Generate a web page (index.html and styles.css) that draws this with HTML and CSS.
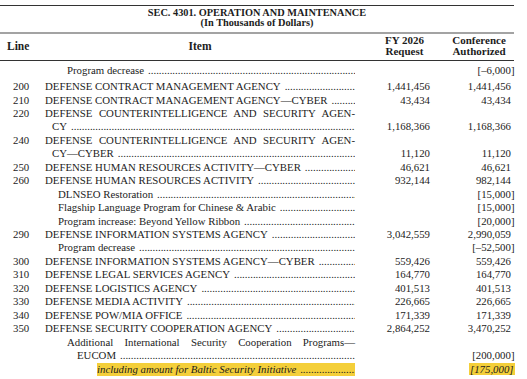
FILE: index.html
```html
<!DOCTYPE html>
<html>
<head>
    <meta charset="UTF-8">
    <link rel="stylesheet" href="styles.css">
</head>
<body>
    <div class="sheet">
        <h1 class="title">SEC. 4301. OPERATION AND MAINTENANCE<br>(In Thousands of Dollars)</h1>
        <div class="grid head">
            <div class="ln">Line</div>
            <div class="item">Item</div>
            <div class="req">FY 2026<br>Request</div>
            <div class="conf">Conference<br>Authorized</div>
        </div>
        <div class="rows">
            <div class="grid row first">
                <div class="ln"></div>
                <div class="item"><div class="lead sub2"><span>Program decrease</span></div></div>
                <div class="amt"></div>
                <div class="amt"><span class="br">[–6,000]</span></div>
            </div>
            <div class="grid row">
                <div class="ln">200</div>
                <div class="item"><div class="lead"><span>DEFENSE CONTRACT MANAGEMENT AGENCY</span></div></div>
                <div class="amt">1,441,456</div>
                <div class="amt">1,441,456</div>
            </div>
            <div class="grid row">
                <div class="ln">210</div>
                <div class="item"><div class="lead"><span>DEFENSE CONTRACT MANAGEMENT AGENCY—CYBER</span></div></div>
                <div class="amt">43,434</div>
                <div class="amt">43,434</div>
            </div>
            <div class="grid row">
                <div class="ln">220</div>
                <div class="item">
                    <div class="just">DEFENSE COUNTERINTELLIGENCE AND SECURITY AGEN-</div>
                    <div class="lead cont"><span>CY</span></div>
                </div>
                <div class="amt">1,168,366</div>
                <div class="amt">1,168,366</div>
            </div>
            <div class="grid row">
                <div class="ln">240</div>
                <div class="item">
                    <div class="just">DEFENSE COUNTERINTELLIGENCE AND SECURITY AGEN-</div>
                    <div class="lead cont"><span>CY—CYBER</span></div>
                </div>
                <div class="amt">11,120</div>
                <div class="amt">11,120</div>
            </div>
            <div class="grid row">
                <div class="ln">250</div>
                <div class="item"><div class="lead"><span>DEFENSE HUMAN RESOURCES ACTIVITY—CYBER</span></div></div>
                <div class="amt">46,621</div>
                <div class="amt">46,621</div>
            </div>
            <div class="grid row">
                <div class="ln">260</div>
                <div class="item"><div class="lead"><span>DEFENSE HUMAN RESOURCES ACTIVITY</span></div></div>
                <div class="amt">932,144</div>
                <div class="amt">982,144</div>
            </div>
            <div class="grid row">
                <div class="ln"></div>
                <div class="item"><div class="lead sub"><span>DLNSEO Restoration</span></div></div>
                <div class="amt"></div>
                <div class="amt"><span class="br">[15,000]</span></div>
            </div>
            <div class="grid row">
                <div class="ln"></div>
                <div class="item"><div class="lead sub"><span>Flagship Language Program for Chinese &amp; Arabic</span></div></div>
                <div class="amt"></div>
                <div class="amt"><span class="br">[15,000]</span></div>
            </div>
            <div class="grid row">
                <div class="ln"></div>
                <div class="item"><div class="lead sub"><span>Program increase: Beyond Yellow Ribbon</span></div></div>
                <div class="amt"></div>
                <div class="amt"><span class="br">[20,000]</span></div>
            </div>
            <div class="grid row">
                <div class="ln">290</div>
                <div class="item"><div class="lead"><span>DEFENSE INFORMATION SYSTEMS AGENCY</span></div></div>
                <div class="amt">3,042,559</div>
                <div class="amt">2,990,059</div>
            </div>
            <div class="grid row">
                <div class="ln"></div>
                <div class="item"><div class="lead sub"><span>Program decrease</span></div></div>
                <div class="amt"></div>
                <div class="amt"><span class="br">[–52,500]</span></div>
            </div>
            <div class="grid row">
                <div class="ln">300</div>
                <div class="item"><div class="lead"><span>DEFENSE INFORMATION SYSTEMS AGENCY—CYBER</span></div></div>
                <div class="amt">559,426</div>
                <div class="amt">559,426</div>
            </div>
            <div class="grid row">
                <div class="ln">310</div>
                <div class="item"><div class="lead"><span>DEFENSE LEGAL SERVICES AGENCY</span></div></div>
                <div class="amt">164,770</div>
                <div class="amt">164,770</div>
            </div>
            <div class="grid row">
                <div class="ln">320</div>
                <div class="item"><div class="lead"><span>DEFENSE LOGISTICS AGENCY</span></div></div>
                <div class="amt">401,513</div>
                <div class="amt">401,513</div>
            </div>
            <div class="grid row">
                <div class="ln">330</div>
                <div class="item"><div class="lead"><span>DEFENSE MEDIA ACTIVITY</span></div></div>
                <div class="amt">226,665</div>
                <div class="amt">226,665</div>
            </div>
            <div class="grid row">
                <div class="ln">340</div>
                <div class="item"><div class="lead"><span>DEFENSE POW/MIA OFFICE</span></div></div>
                <div class="amt">171,339</div>
                <div class="amt">171,339</div>
            </div>
            <div class="grid row">
                <div class="ln">350</div>
                <div class="item"><div class="lead"><span>DEFENSE SECURITY COOPERATION AGENCY</span></div></div>
                <div class="amt">2,864,252</div>
                <div class="amt">3,470,252</div>
            </div>
            <div class="grid row">
                <div class="ln"></div>
                <div class="item">
                    <div class="just sub2">Additional International Security Cooperation Programs—</div>
                    <div class="lead sub3"><span>EUCOM</span></div>
                </div>
                <div class="amt"></div>
                <div class="amt"><span class="br">[200,000]</span></div>
            </div>
            <div class="grid row">
                <div class="ln"></div>
                <div class="item"><div class="lead sub4 mark"><span>including amount for Baltic Security Initiative</span></div></div>
                <div class="amt"></div>
                <div class="amt"><span class="br mark-amt">[175,000]</span></div>
            </div>
        </div>
    </div>
</body>
</html>
```

FILE: styles.css
```css
body {
    margin: 0;
    background: #fff;
    color: #1c1c1c;
    font-family: "Liberation Serif", "Times New Roman", serif;
}
.sheet {
    width: 514px;
    margin-top: 5px;
}
.title {
    margin: 0;
    padding: 2px 0 4px;
    border-top: 1px solid #333;
    border-bottom: 2px solid #a3a3a3;
    font-size: 10.3px;
    line-height: 10px;
    font-weight: bold;
    text-align: center;
}
.grid {
    display: grid;
    grid-template-columns: 45px 310px 75px 81px;
}
.head {
    padding: 1px 0 3px;
    border-bottom: 1px solid #333;
    font-size: 11px;
    line-height: 11px;
    font-weight: bold;
    align-items: center;
}
.head .ln {
    padding-left: 7px;
    font-size: 11.5px;
}
.head .item {
    text-align: center;
    font-size: 11.5px;
}
.head .req {
    padding-left: 24px;
    text-align: center;
}
.head .conf {
    padding-left: 17px;
    text-align: center;
}
.rows {
    padding-top: 3px;
    font-size: 10.8px;
    line-height: 13.45px;
}
.row .ln {
    padding-left: 13px;
}
.row.first {
    margin-bottom: 2.6px;
}
.amt {
    align-self: end;
    text-align: right;
    white-space: nowrap;
}
.br {
    margin-right: -3.5px;
}
.lead {
    display: flex;
}
.lead span {
    flex: none;
}
.lead::after {
    content: "................................................................................................................................................................";
    flex: 1;
    min-width: 0;
    overflow: hidden;
    white-space: nowrap;
    margin-left: 4px;
}
.just {
    text-align: justify;
    text-align-last: justify;
}
.cont {
    margin-left: 7px;
}
.sub {
    margin-left: 13px;
}
.sub2 {
    margin-left: 22px;
}
.sub3 {
    margin-left: 32px;
}
.sub4 {
    margin-left: 52px;
}
.mark {
    background: #f4cf3a;
    font-style: italic;
}
.mark-amt {
    padding: 0 1px;
    background: #f4cf3a;
    font-style: italic;
}
```
